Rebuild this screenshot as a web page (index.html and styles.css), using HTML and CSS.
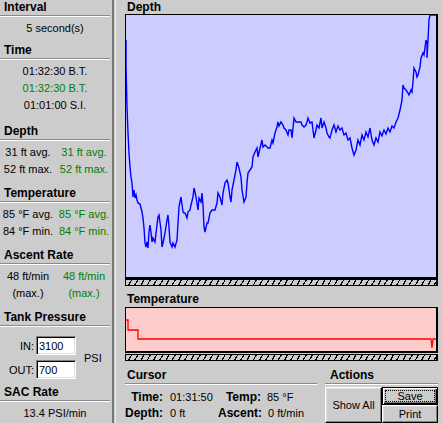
FILE: index.html
```html
<!DOCTYPE html>
<html lang="en">
<head>
  <meta charset="UTF-8" />
  <meta name="viewport" content="width=device-width, initial-scale=1.0" />
  <title>Dive Profile</title>
  <link rel="stylesheet" href="styles.css">
</head>
<body>
  <!-- Left stats column -->
  <div class="stats">
    <div class="section interval">
      <div class="head">Interval</div>
      <div class="body">
        <div class="row">5 second(s)</div>
      </div>
    </div>

    <div class="section time">
      <div class="head">Time</div>
      <div class="body">
        <div class="row">01:32:30 B.T.</div>
        <div class="row live">01:32:30 B.T.</div>
        <div class="row">01:01:00 S.I.</div>
      </div>
    </div>

    <div class="section">
      <div class="head">Depth</div>
      <div class="body">
        <div class="pair"><span>31 ft avg.</span><span class="live">31 ft avg.</span></div>
        <div class="pair"><span>52 ft max.</span><span class="live">52 ft max.</span></div>
      </div>
    </div>

    <div class="section">
      <div class="head">Temperature</div>
      <div class="body">
        <div class="pair"><span>85 °F avg.</span><span class="live">85 °F avg.</span></div>
        <div class="pair"><span>84 °F min.</span><span class="live">84 °F min.</span></div>
      </div>
    </div>

    <div class="section">
      <div class="head">Ascent Rate</div>
      <div class="body">
        <div class="pair"><span>48 ft/min</span><span class="live">48 ft/min</span></div>
        <div class="pair"><span>(max.)</span><span class="live">(max.)</span></div>
      </div>
    </div>

    <div class="section tank">
      <div class="head">Tank Pressure</div>
      <div class="body tank-grid">
        <label class="tank-label">IN:</label>
        <input class="tank-input" type="text" value="3100">
        <span class="psi">PSI</span>
        <label class="tank-label">OUT:</label>
        <input class="tank-input" type="text" value="700">
      </div>
    </div>

    <div class="section">
      <div class="head">SAC Rate</div>
      <div class="body">
        <div class="row">13.4 PSI/min</div>
      </div>
    </div>
  </div>

  <div class="splitter"></div>

  <!-- Graphs and cursor readout -->
  <div class="charts">
    <div class="chart-title">Depth</div>
    <div class="plot depth-plot">
      <svg viewBox="126 15 310 262" preserveAspectRatio="none">
        <polyline class="depth-line" points="126,40 126,65 127,107 128,133 129,153 130,167 131,177 132,183 133,197 134,190 135,198 136,195 137,200 138,203 140,204 142,212 143,218 144,228 145,243 146,247 147,242 148,248 149,232 150,225 151,232 152,242 153,238 155,242 156,233 158,217 159,215 161,230 162,247 163,243 165,233 167,220 168,215 169,227 170,242 172,247 173,243 175,247 177,240 178,223 179,207 181,197 183,212 184,213 185,213 187,218 188,212 190,210 191,205 193,197 194,188 195,192 196,197 198,210 199,198 201,202 202,193 203,205 204,227 205,232 207,223 208,223 210,213 212,210 215,210 217,203 218,193 220,197 222,205 223,193 225,183 227,180 228,183 230,197 231,202 232,190 234,180 236,170 237,162 239,168 241,177 242,190 244,202 246,197 247,183 248,173 250,170 252,167 253,157 255,152 257,148 258,157 260,148 262,140 263,147 265,145 267,147 268,148 270,148 272,140 273,143 275,133 277,127 278,122 279,126 281,122 283,125 284,128 286,130 288,135 289,130 291,130 292,138 294,118 296,122 297,122 301,122 302,125 304,127 306,125 307,122 308,118 310,123 312,122 313,130 314,138 316,130 317,125 319,128 321,118 322,128 324,122 326,128 327,133 329,137 330,138 332,130 334,125 336,132 338,126 340,130 342,128 344,135 346,133 348,140 350,138 352,148 354,155 356,150 358,140 360,145 362,135 364,140 366,132 368,137 370,128 372,140 374,145 376,138 378,142 380,132 382,136 384,130 386,134 388,128 390,132 392,126 394,128 396,122 398,118 400,110 402,100 403,85 404,88 406,90 408,93 409,95 411,90 412,92 413,82 414,68 416,72 417,77 418,75 420,67 421,58 423,53 424,55 425,47 426,40 427,43 427,58 428,40 429,20 430,15 436,15"/>
      </svg>
    </div>
    <div class="scrollbar"></div>

    <div class="chart-title temp-title">Temperature</div>
    <div class="plot temp-plot">
      <svg viewBox="126 308 310 43" preserveAspectRatio="none">
        <polyline class="temp-line" points="126,320 128,320 128,330 138,330 138,339 431,339 432,348 433,339 436,339"/>
      </svg>
    </div>
    <div class="scrollbar temp-scroll"></div>

    <div class="bottom">
      <div class="cursor">
        <div class="head">Cursor</div>
        <div class="readout">
          <span class="key">Time:</span><span class="val">01:31:50</span>
          <span class="key">Temp:</span><span class="val">85 °F</span>
          <span class="key">Depth:</span><span class="val">0 ft</span>
          <span class="key">Ascent:</span><span class="val">0 ft/min</span>
        </div>
      </div>
      <div class="actions">
        <div class="head">Actions</div>
        <div class="buttons">
          <button class="btn show-all">Show All</button>
          <div class="btn-stack">
            <button class="btn default"><span class="focus">Save</span></button>
            <button class="btn">Print</button>
          </div>
        </div>
      </div>
    </div>
  </div>
</body>
</html>
```

FILE: styles.css
```css
body {
  margin: 0;
  width: 442px;
  height: 423px;
  overflow: hidden;
  display: flex;
  background: #cccccc;
  color: #000;
  font-family: 'Liberation Sans', Arial, sans-serif;
  font-size: 11px;
}

/* Section headers with etched underline */
.head {
  height: 15px;
  line-height: 15px;
  padding-left: 4px;
  font-size: 12px;
  font-weight: bold;
  border-bottom: 1px solid #8a8a8a;
  box-shadow: 0 1px 0 #ffffff;
}

/* Left stats column */
.stats {
  width: 112px;
  flex: none;
}

.stats .head {
  margin-right: 2px;
}

.body {
  padding: 4px 0 8px;
}

.interval .body {
  padding-bottom: 6px;
}

.time .body {
  padding-bottom: 10px;
}

.row {
  line-height: 17px;
  text-align: center;
  padding-right: 2px;
}

.pair {
  display: grid;
  grid-template-columns: 56px 56px;
  line-height: 17px;
  text-align: center;
}

.live {
  color: #008000;
}

/* Tank pressure inputs */
.tank-grid {
  display: grid;
  grid-template-columns: 34px 40px auto;
  grid-template-rows: 19px 19px;
  column-gap: 2px;
  row-gap: 5px;
  padding: 10px 0 6px;
  align-items: center;
}

.tank-label {
  text-align: right;
}

.tank-input {
  box-sizing: border-box;
  width: 40px;
  height: 19px;
  margin: 0;
  padding: 0 2px;
  font-family: 'Liberation Sans', Arial, sans-serif;
  font-size: 11px;
  background: #fff;
  border: 1px solid;
  border-color: #808080 #ffffff #ffffff #808080;
  box-shadow: inset 1px 1px 0 #000, inset -1px -1px 0 #dfdfdf;
  outline: none;
}

.psi {
  grid-column: 3;
  grid-row: 1 / span 2;
  padding-left: 6px;
}

/* Splitter between panes */
.splitter {
  width: 1px;
  flex: none;
  border-left: 2px solid #777777;
  border-right: 1px solid #ececec;
}

/* Right pane */
.charts {
  flex: 1;
  padding: 0 4px 0 9px;
}

.chart-title {
  height: 14px;
  line-height: 14px;
  padding-left: 2px;
  font-size: 12px;
  font-weight: bold;
}

.temp-title {
  height: 16px;
  line-height: 16px;
  padding-top: 5px;
}

.plot {
  border: 1px solid #000;
  border-right-width: 2px;
  border-bottom-width: 2px;
}

.plot svg {
  display: block;
  width: 100%;
  height: 100%;
}

.depth-plot {
  height: 262px;
  background: #ccccff;
}

.temp-plot {
  height: 43px;
  background: #ffcccc;
}

.depth-line {
  fill: none;
  stroke: #0000ff;
  stroke-width: 1.4;
}

.temp-line {
  fill: none;
  stroke: #ff0000;
  stroke-width: 1.3;
}

/* Hatched scroll strip under each graph */
.scrollbar {
  height: 5px;
  border: 1px solid #000;
  border-right-width: 2px;
  background: repeating-linear-gradient(120deg, #cccccc 0 4.2px, #000 4.2px 5.4px);
}

.temp-scroll {
  margin-top: 1px;
}

/* Cursor readout and actions */
.bottom {
  display: flex;
  margin-top: 7px;
}

.cursor {
  width: 192px;
}

.cursor .head {
  padding-left: 2px;
}

.readout {
  display: grid;
  grid-template-columns: 38px 55px 43px auto;
  line-height: 16px;
  padding-top: 5px;
}

.key {
  font-weight: bold;
  font-size: 12px;
  text-align: right;
}

.val {
  padding-left: 7px;
}

.val:nth-child(4) {
  padding-left: 6px;
}

.actions {
  flex: 1;
  margin-left: 8px;
}

.actions .head {
  padding-left: 5px;
}

.buttons {
  display: flex;
  margin-top: 3px;
}

.btn {
  box-sizing: border-box;
  margin: 0;
  padding: 0;
  background: #cccccc;
  color: #000;
  font-family: 'Liberation Sans', Arial, sans-serif;
  font-size: 11px;
  border: 1px solid;
  border-color: #ffffff #000 #000 #ffffff;
  box-shadow: inset -1px -1px 0 #808080, inset 1px 1px 0 #dfdfdf;
  width: 56px;
  height: 18px;
}

.show-all {
  width: 57px;
  height: 36px;
}

.btn-stack {
  display: flex;
  flex-direction: column;
}

.btn.default {
  border: 1px solid #000;
  box-shadow: inset 1px 1px 0 #ffffff, inset -1px -1px 0 #000, inset -2px -2px 0 #808080;
}

.focus {
  display: inline-block;
  padding: 0 11px;
  line-height: 10px;
  border: 1px dotted #000;
}
```
